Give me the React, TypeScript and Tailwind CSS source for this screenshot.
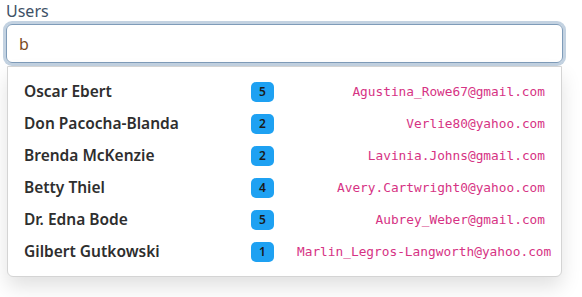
import React from 'react';

const users = [
  { name: 'Oscar Ebert', count: 5, email: 'Agustina_Rowe67@gmail.com' },
  { name: 'Don Pacocha-Blanda', count: 2, email: 'Verlie80@yahoo.com' },
  { name: 'Brenda McKenzie', count: 2, email: 'Lavinia.Johns@gmail.com' },
  { name: 'Betty Thiel', count: 4, email: 'Avery.Cartwright0@yahoo.com' },
  { name: 'Dr. Edna Bode', count: 5, email: 'Aubrey_Weber@gmail.com' },
  { name: 'Gilbert Gutkowski', count: 1, email: 'Marlin_Legros-Langworth@yahoo.com' },
];

export default function App() {
  return (
    <div className="min-h-[297px] w-[582px] bg-white font-['Noto_Sans',sans-serif]">
      <div className="ml-[6px] w-[557px]">
        <label htmlFor="users" className="block h-[24px] text-[16px] leading-[22px] text-[#3d5166]">
          Users
        </label>
        <input
          id="users"
          defaultValue="b"
          className="block h-[39px] w-full rounded-[6px] border border-[#7f9cb9] px-[12px] text-[16px] text-[#7a4a1e] outline-none ring-[3px] ring-[#c3d2e1]"
        />
        {/* dropdown list */}
        <div className="mx-[1px] mt-[3px] rounded-b-[6px] border border-[#d4d4d4] bg-white pt-[9px] pb-[8px] shadow-[0_10px_20px_rgba(0,0,0,0.12)]">
          {users.map((u) => (
            <div key={u.email} className="flex h-[32px] items-center pl-[16px]">
              <div className="w-[227px] text-[15.5px] font-semibold text-[#2e2e2e]">{u.name}</div>
              <span className="flex h-[20px] w-[23px] items-center justify-center rounded-[5px] bg-[#1ea1f2] text-[12px] font-semibold text-[#1a1a1a]">
                {u.count}
              </span>
              <div className="ml-[23px] w-[248px] whitespace-nowrap text-right font-['DejaVu_Sans_Mono',monospace] text-[12.8px] text-[#d63384]">
                {u.email}
              </div>
            </div>
          ))}
        </div>
      </div>
    </div>
  );
}
